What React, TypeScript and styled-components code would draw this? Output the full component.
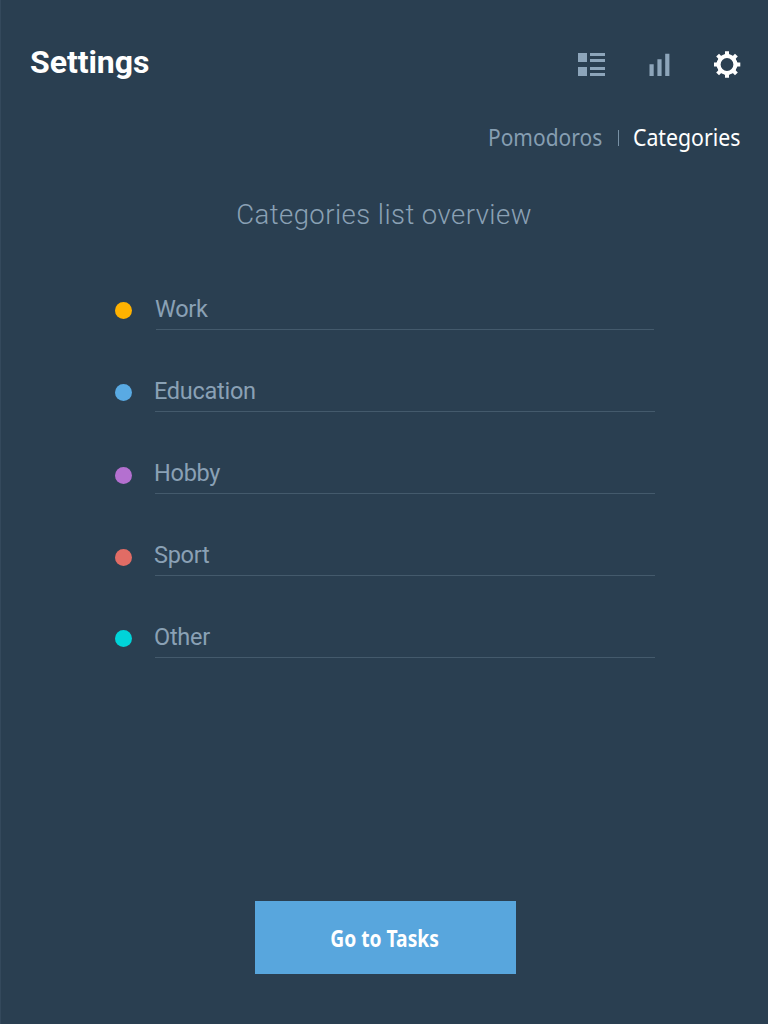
import React from 'react';
import styled, { createGlobalStyle } from 'styled-components';

const GlobalStyle = createGlobalStyle`
  *, *::before, *::after { box-sizing: border-box; }
  body { margin: 0; background: #2a3f51; font-family: Roboto, sans-serif; }
`;

const Screen = styled.div`
  width: 768px;
  height: 1024px;
  display: flex;
  flex-direction: column;
  align-items: center;
  background: #2a3f51;
  box-shadow: inset 1px 0 0 #34495c;
  overflow: hidden;
`;

const Header = styled.header`
  width: 100%;
  height: 78px;
  padding: 42px 27px 0 30px;
  display: flex;
  justify-content: space-between;
  align-items: flex-start;
`;

const Title = styled.h1`
  margin: 0;
  font-size: 32px;
  line-height: 40px;
  font-weight: 700;
  letter-spacing: -0.05px;
  color: #fff;
`;

const Nav = styled.nav`
  display: flex;
  padding-top: 9px;
`;

const NavButton = styled.button<{ $active?: boolean; $gap?: number }>`
  display: block;
  border: 0;
  padding: 0;
  margin-left: ${(p) => p.$gap ?? 0}px;
  background: none;
  color: ${(p) => (p.$active ? '#fff' : '#8da5ba')};
  svg { display: block; }
`;

const Tabs = styled.div`
  width: 100%;
  height: 36px;
  margin-top: 42px;
  padding-right: 28px;
  display: flex;
  justify-content: flex-end;
  align-items: center;
`;

const Tab = styled.button<{ $active?: boolean; $width: number }>`
  width: ${(p) => p.$width}px;
  border: 0;
  padding: 0 0 2px;
  background: none;
  display: flex;
  color: ${(p) => (p.$active ? '#fff' : '#869eb2')};
  font: 400 23.5px/34px 'Noto Sans', sans-serif;
  white-space: nowrap;
`;

const Narrow = styled.span<{ $scale: number; $origin?: string }>`
  display: block;
  transform: scaleX(${(p) => p.$scale});
  transform-origin: ${(p) => p.$origin ?? 'left'} center;
`;

const Divider = styled.span`
  width: 1px;
  height: 16px;
  margin: 0 14px 0 15px;
  background: #7891a5;
`;

const Subtitle = styled.h2`
  margin: 39px 0 0;
  font-size: 27.5px;
  line-height: 40px;
  font-weight: 300;
  letter-spacing: 0.45px;
  color: #8aa1b5;
`;

const List = styled.ul`
  list-style: none;
  width: 540px;
  margin: 53px 0 0 2px;
  padding: 0;
`;

const Row = styled.li`
  height: 82px;
  display: flex;
  align-items: flex-start;
`;

const Dot = styled.span<{ $color: string; $top: number }>`
  width: 17px;
  height: 17px;
  margin-top: ${(p) => p.$top}px;
  border-radius: 50%;
  background: ${(p) => p.$color};
`;

const Field = styled.div<{ $inset?: boolean }>`
  flex: 1;
  height: 42px;
  margin: 0 ${(p) => (p.$inset ? 1 : 0)}px 0 ${(p) => (p.$inset ? 24 : 23)}px;
  border-bottom: 1px solid #445a6c;
  font-size: 23.5px;
  line-height: 43px;
  letter-spacing: -0.27px;
  text-indent: -1px;
  color: #8aa1b5;
`;

const Action = styled.button`
  width: 261px;
  height: 73px;
  margin: auto 0 50px 3px;
  padding: 3px 2px 0 0;
  border: 0;
  display: flex;
  justify-content: center;
  align-items: center;
  background: #58a6dd;
  color: #fff;
  font: 700 22.5px/32px 'Noto Sans', sans-serif;
  white-space: nowrap;
`;

const categories = [
  { name: 'Work', color: '#ffb200', top: 14 },
  { name: 'Education', color: '#59aae3', top: 14 },
  { name: 'Hobby', color: '#b470d0', top: 15 },
  { name: 'Sport', color: '#e16c65', top: 15 },
  { name: 'Other', color: '#00d4d9', top: 14 },
];

const ListIcon = () => (
  <svg width="27" height="27" viewBox="0 0 27 27" fill="currentColor">
    <path d="M0 2h9v9H0zM0 16h9v9H0zM12 2h15v3H12zM12 8h15v3H12zM12 16h15v3H12zM12 22h15v3H12z" />
  </svg>
);

const ChartIcon = () => (
  <svg width="21" height="27" viewBox="0 0 21 27" fill="currentColor">
    <path d="M.5 13.3h4.2V25H.5zM8.4 8.2h4.2V25H8.4zM16.2 2.7h4.2V25h-4.2z" />
  </svg>
);

const GearIcon = () => (
  <svg width="27" height="27" viewBox="0 0 27 27" fill="currentColor">
    <g transform="translate(-.5 0)">
      <circle cx="13.5" cy="13.5" r="8.4" fill="none" stroke="currentColor" strokeWidth="4" />
      {[0, 45, 90, 135, 180, 225, 270, 315].map((angle) => (
        <path key={angle} d="M9.6 5L11.5 3V.2h4V3l1.9 2z" transform={`rotate(${angle} 13.5 13.5)`} />
      ))}
    </g>
  </svg>
);

export default function App() {
  return (
    <Screen>
      <GlobalStyle />
      <Header>
        <Title>Settings</Title>
        <Nav>
          <NavButton aria-label="Tasks"><ListIcon /></NavButton>
          <NavButton aria-label="Reports" $gap={44}><ChartIcon /></NavButton>
          <NavButton aria-label="Settings" $active $gap={44}><GearIcon /></NavButton>
        </Nav>
      </Header>
      <Tabs>
        <Tab $width={115}><Narrow $scale={0.892}>Pomodoros</Narrow></Tab>
        <Divider />
        <Tab $active $width={107}><Narrow $scale={0.905}>Categories</Narrow></Tab>
      </Tabs>
      <Subtitle>Categories list overview</Subtitle>
      <List>
        {categories.map((c, i) => (
          <Row key={c.name}>
            <Dot $color={c.color} $top={c.top} />
            <Field $inset={i === 0}>{c.name}</Field>
          </Row>
        ))}
      </List>
      <Action><Narrow $scale={0.855} $origin="center">Go to Tasks</Narrow></Action>
    </Screen>
  );
}
